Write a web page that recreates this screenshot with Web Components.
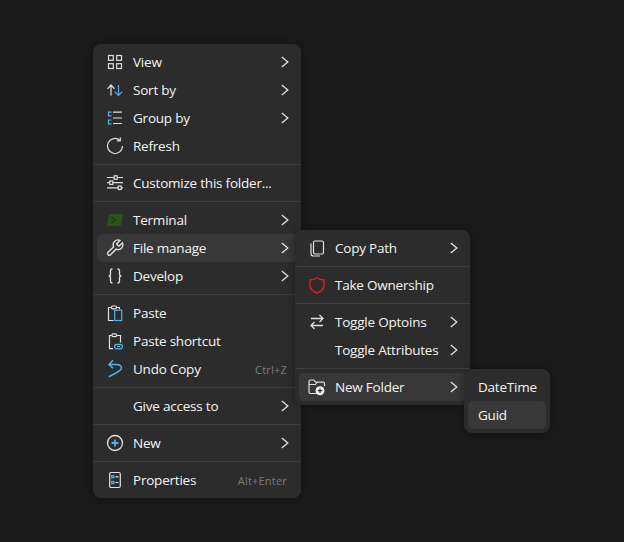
<!DOCTYPE html>
<html lang="en">
<head>
<meta charset="utf-8" />
<title>Context Menu</title>
<style>
  html, body { height: 100%; }
  body {
    margin: 0;
    padding: 44px 0 0 93px;
    box-sizing: border-box;
    background: #1a1a1a;
    color: #f4f4f4;
    font: 13.5px "Open Sans", "Noto Sans", sans-serif;
    letter-spacing: -0.22px;
    overflow: hidden;
  }
</style>

<template id="menu-template">
  <style>
    :host {
      display: flex;
      flex-direction: column;
      box-sizing: border-box;
      padding: 4px;
      width: var(--menu-width, 208px);
      background: #2c2c2c;
      border-radius: 8px;
      box-shadow: 0 0 10px rgba(0, 0, 0, 0.35);
    }
  </style>
  <slot></slot>
</template>

<template id="item-template">
  <style>
    :host {
      display: block;
      position: relative;
      height: 28px;
    }
    .row {
      display: flex;
      align-items: center;
      gap: 8px;
      box-sizing: border-box;
      height: 28px;
      padding: 0 4px 0 8px;
      border-radius: 5px;
      white-space: nowrap;
    }
    :host([active]) .row { background: #383838; }
    :host([plain]) .row { padding: 0 10px; }
    :host([plain]) .icon { display: none; }
    .icon { width: 20px; height: 20px; flex: none; }
    .label { flex: 1; }
    .keys {
      margin-right: 6px;
      color: #7c7c7c;
      font-size: 11px;
      letter-spacing: 0.2px;
    }
    .chevron { width: 16px; height: 16px; flex: none; display: none; }
    :host([more]) .chevron { display: block; }
  </style>
  <div class="row">
    <span class="icon"><slot name="icon"></slot></span>
    <span class="label"><slot></slot></span>
    <span class="keys"></span>
    <svg class="chevron" viewBox="0 0 16 16" fill="none" stroke="#e2e2e2" stroke-width="1.3">
      <path d="M4.8 3l6 5-6 5" />
    </svg>
  </div>
  <slot name="flyout"></slot>
</template>

<script>
  // icons are all drawn on a 20x20 box, blue parts use .b
  const ICONS = {
    view: '<rect x="3.5" y="3.5" width="4.8" height="4.8"/><rect x="11.7" y="3.5" width="4.8" height="4.8"/><rect x="3.5" y="11.7" width="4.8" height="4.8"/><rect x="11.7" y="11.7" width="4.8" height="4.8"/>',
    sort: '<path d="M6 15.5V5M2.5 8.8L6 5l3.5 3.8"/><path class="b" d="M13.5 5v10.5M9.7 11.7l3.8 3.8 3.8-3.8"/>',
    group: '<path class="b" d="M6.5 4.200h-3v3.600h3M6.500 12h-3v3.800h3"/><path d="M8 4.200h9M8 10h9M8 15.500h9"/>',
    refresh: '<path d="M14.800 4.200A7.500 7.500 0 1 0 17.500 10"/><path d="M15.300 1.500v3.400h-3.400"/>',
    sliders: '<path d="M2 4.500h7M12.500 4.500H18M2 9.700h2.800M8 9.700h10M2 14.800h11M16.500 14.800H18"/><rect x="9.200" y="2.800" width="3" height="3.500"/><rect x="4.800" y="8" width="3" height="3.500"/><rect x="13.200" y="13" width="3" height="3.500"/>',
    terminal: '<path d="M4 4.300h14l-2 11.400H2z" fill="#2b5516" stroke="none"/><path d="M6.500 6.800l4 3.200-4.300 3.200" stroke="#1c3b12"/>',
    wrench: '<path transform="translate(.2 .4) scale(.8)" stroke-width="1.700" d="M14.700 6.300a1 1 0 0 0 0 1.400l1.600 1.600a1 1 0 0 0 1.400 0l3.770-3.770a6 6 0 0 1-7.940 7.940l-6.910 6.910a2.120 2.120 0 0 1-3-3l6.910-6.910a6 6 0 0 1 7.940-7.940l-3.760 3.760z"/>',
    braces: '<path stroke-width="1.300" d="M7.500 3H7C5.700 3 5.500 4 5.500 5v3c0 1.300-.9 2-1.800 2 .9 0 1.800.7 1.800 2v3c0 1 .2 2 1.500 2h.5M12.500 3h.5c1.300 0 1.500 1 1.500 2v3c0 1.300.9 2 1.800 2-.9 0-1.800.7-1.800 2v3c0 1-.2 2-1.500 2h-.5"/>',
    paste: '<path d="M8.500 17.500h-5v-13h3M12 4.500h2.500v1.700"/><rect x="6.500" y="3" width="5" height="2.800" rx="1"/><rect class="b" x="9.700" y="7.200" width="7" height="10.300"/>',
    shortcut: '<path d="M8 17.700H4.500V4.500h2.500M11.500 4.500h4v7"/><rect x="7" y="2.800" width="4.500" height="2.800" rx="1"/><rect class="b" x="9.500" y="13.300" width="8" height="4.500" rx="2.200"/><path class="b" d="M12 15.500h3"/>',
    undo: '<path class="b" stroke-width="1.500" d="M8 1.200L4 5.500 8 9.300M4.300 5.500H11c4.200 0 6.200 1.700 5.200 4.500-.8 2.200-6.700 4.800-12.500 7.700"/>',
    plus: '<circle cx="10" cy="10" r="7.500" stroke-width="1.300"/><path class="b" stroke-width="1.800" d="M10 6.500v7M6.500 10h7"/>',
    props: '<rect x="4.700" y="2.500" width="10.600" height="15" rx="1.200"/><rect class="b" x="6.700" y="5.800" width="2.200" height="2"/><rect class="b" x="6.700" y="11.500" width="2.200" height="2"/><path d="M10.500 6.800h3M10.500 12.500h3"/>',
    copy: '<rect x="6.500" y="3" width="10" height="13" rx="1.500"/><path d="M4 5.500v10c0 1.500 1 2.500 2.500 2.500H13"/>',
    shield: '<path stroke="#d9202a" stroke-width="1.400" d="M10 2.800c2 1.700 4.500 2.200 7 2.200v5c0 4-3 6.500-7 8-4-1.500-7-4-7-8V5c2.500 0 5-.5 7-2.200z"/>',
    swap: '<path stroke-width="1.300" d="M4 6.500h12M12.500 3L16 6.500 12.500 10M16 13.500H4M7.500 10L4 13.500 7.500 17"/>',
    folder: '<path d="M10 16.500H3.500A1.500 1.500 0 0 1 2 15V4.500C2 3.700 2.700 3 3.500 3h3.300l2 2.200h7.200c.9 0 1.500.6 1.500 1.500V9M2 7.500h6.500l1.500-2"/><circle cx="13" cy="13.700" r="4.500" fill="#f0f0f0" stroke="none"/><path stroke="#2c2c2c" stroke-width="1.200" d="M13 11.500v4.400M10.800 13.700h4.400"/>'
  };

  class CtxMenu extends HTMLElement {
    constructor() {
      super();
      const shadow = this.attachShadow({mode: 'open'});
      shadow.appendChild(document.querySelector('#menu-template').content.cloneNode(true));
    }
  }

  class CtxItem extends HTMLElement {
    constructor() {
      super();
      const shadow = this.attachShadow({mode: 'open'});
      shadow.appendChild(document.querySelector('#item-template').content.cloneNode(true));
      this._keys = shadow.querySelector('.keys');
    }
    connectedCallback() {
      this._keys.textContent = this.getAttribute('keys') || '';
      if (!this.hasAttribute('keys')) this._keys.remove();
    }
  }

  class CtxSep extends HTMLElement {
    constructor() {
      super();
      this.attachShadow({mode: 'open'}).innerHTML = `
        <style>
          :host {
            display: block;
            height: 1px;
            margin: 4px -4px;
            background: #3e3e3e;
          }
        </style>`;
    }
  }

  class CtxIcon extends HTMLElement {
    constructor() {
      super();
      this.attachShadow({mode: 'open'});
    }
    connectedCallback() {
      this.shadowRoot.innerHTML = `
        <style>
          :host { display: block; width: 20px; height: 20px; }
          svg { display: block; fill: none; stroke: #e0e0e0; stroke-width: 1.200; }
          .b { stroke: #4fb4ee; }
        </style>
        <svg width="20" height="20" viewBox="0 0 20 20">${ICONS[this.getAttribute('name')]}</svg>`;
    }
  }

  // flyouts lie over the menu that opened them
  class CtxFlyout extends HTMLElement {
    constructor() {
      super();
      this.attachShadow({mode: 'open'}).innerHTML = `
        <style>
          :host {
            display: block;
            position: absolute;
            top: -4px;
            left: var(--fly-left);
            z-index: 2;
          }
        </style>
        <slot></slot>`;
    }
  }

  customElements.define('ctx-menu', CtxMenu);
  customElements.define('ctx-item', CtxItem);
  customElements.define('ctx-sep', CtxSep);
  customElements.define('ctx-icon', CtxIcon);
  customElements.define('ctx-flyout', CtxFlyout);
</script>
</head>
<body>

<ctx-menu>
  <ctx-item more><ctx-icon slot="icon" name="view"></ctx-icon>View</ctx-item>
  <ctx-item more><ctx-icon slot="icon" name="sort"></ctx-icon>Sort by</ctx-item>
  <ctx-item more><ctx-icon slot="icon" name="group"></ctx-icon>Group by</ctx-item>
  <ctx-item><ctx-icon slot="icon" name="refresh"></ctx-icon>Refresh</ctx-item>
  <ctx-sep></ctx-sep>
  <ctx-item><ctx-icon slot="icon" name="sliders"></ctx-icon>Customize this folder...</ctx-item>
  <ctx-sep></ctx-sep>
  <ctx-item more><ctx-icon slot="icon" name="terminal"></ctx-icon>Terminal</ctx-item>
  <ctx-item more active><ctx-icon slot="icon" name="wrench"></ctx-icon>File manage
    <ctx-flyout slot="flyout" style="--fly-left: 198px">
      <ctx-menu style="--menu-width: 175px">
        <ctx-item more><ctx-icon slot="icon" name="copy"></ctx-icon>Copy Path</ctx-item>
        <ctx-sep></ctx-sep>
        <ctx-item><ctx-icon slot="icon" name="shield"></ctx-icon>Take Ownership</ctx-item>
        <ctx-sep></ctx-sep>
        <ctx-item more><ctx-icon slot="icon" name="swap"></ctx-icon>Toggle Optoins</ctx-item>
        <ctx-item more>Toggle Attributes</ctx-item>
        <ctx-sep></ctx-sep>
        <ctx-item more active><ctx-icon slot="icon" name="folder"></ctx-icon>New Folder
          <ctx-flyout slot="flyout" style="--fly-left: 165px">
            <ctx-menu style="--menu-width: 86px">
              <ctx-item plain>DateTime</ctx-item>
              <ctx-item plain active>Guid</ctx-item>
            </ctx-menu>
          </ctx-flyout>
        </ctx-item>
      </ctx-menu>
    </ctx-flyout>
  </ctx-item>
  <ctx-item more><ctx-icon slot="icon" name="braces"></ctx-icon>Develop</ctx-item>
  <ctx-sep></ctx-sep>
  <ctx-item><ctx-icon slot="icon" name="paste"></ctx-icon>Paste</ctx-item>
  <ctx-item><ctx-icon slot="icon" name="shortcut"></ctx-icon>Paste shortcut</ctx-item>
  <ctx-item keys="Ctrl+Z"><ctx-icon slot="icon" name="undo"></ctx-icon>Undo Copy</ctx-item>
  <ctx-sep></ctx-sep>
  <ctx-item more>Give access to</ctx-item>
  <ctx-sep></ctx-sep>
  <ctx-item more><ctx-icon slot="icon" name="plus"></ctx-icon>New</ctx-item>
  <ctx-sep></ctx-sep>
  <ctx-item keys="Alt+Enter"><ctx-icon slot="icon" name="props"></ctx-icon>Properties</ctx-item>
</ctx-menu>

</body>
</html>
